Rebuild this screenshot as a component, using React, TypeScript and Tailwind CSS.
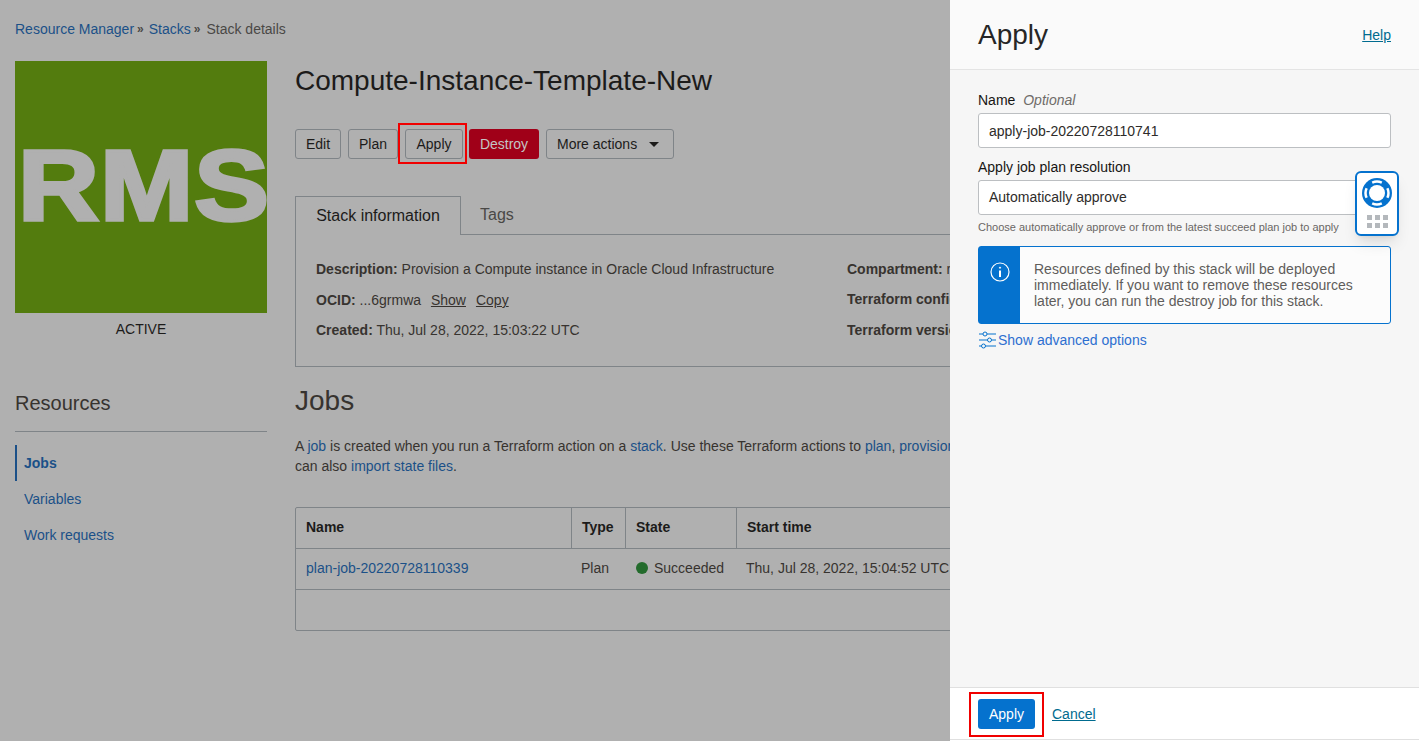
const link = "text-[#1b5088]";

function ActionButton({ label, className = "" }: { label: string; className?: string }) {
  return (
    <button className={`h-[30px] rounded-[3px] border border-[#7f8488] text-sm text-[#1c1b1a] ${className}`}>
      {label}
    </button>
  );
}

function Sidebar() {
  return (
    <aside className="w-[252px] shrink-0">
      <div className="flex h-[252px] items-center justify-end overflow-hidden bg-[#537c0e] pb-[2px]">
        <span className="-mr-[3px] scale-y-[0.9] text-[112px] leading-none font-bold tracking-[1px] text-[#b0b0b0] [-webkit-text-stroke:4px_#b0b0b0]">
          RMS
        </span>
      </div>
      <div className="mt-[8px] text-center text-sm leading-[16px] text-[#1c1b1a]">ACTIVE</div>
      <h2 className="mt-[54px] border-b border-[#7f8488] pb-[16px] text-xl leading-[24px] text-[#37332f]">
        Resources
      </h2>
      <ul className={`mt-[13px] text-sm ${link}`}>
        <li className="flex h-[36px] items-center border-l-2 border-[#1b5088] pl-[7px] font-bold">Jobs</li>
        <li className="flex h-[36px] items-center pl-[9px]">Variables</li>
        <li className="flex h-[36px] items-center pl-[9px]">Work requests</li>
      </ul>
    </aside>
  );
}

function InfoRow({ children, className = "h-[31px]" }: { children: React.ReactNode; className?: string }) {
  return <div className={`leading-[20px] whitespace-nowrap ${className}`}>{children}</div>;
}

function StackInfo() {
  return (
    <>
      <div className="mt-[37px] flex h-[39px]">
        <div className="z-10 flex h-[39px] w-[166px] items-center justify-center rounded-t-[1px] border border-b-0 border-[#7f8488] text-base text-[#1c1b1a]">
          Stack information
        </div>
        <div className="flex flex-1 border-b border-[#7f8488]">
          <span className="ml-[19px] pt-[7px] text-base text-[#4a4846]">Tags</span>
        </div>
      </div>
      <div className="flex h-[132px] border border-t-0 border-[#7f8488] pt-[24px] pl-[20px] text-sm text-[#37332f]">
        <div className="w-[531px]">
          <InfoRow><b>Description:</b> Provision a Compute instance in Oracle Cloud Infrastructure</InfoRow>
          <InfoRow className="h-[30px]">
            <b>OCID:</b> ...6grmwa <span className="ml-[6px] underline">Show</span>
            <span className="ml-[10px] underline">Copy</span>
          </InfoRow>
          <InfoRow><b>Created:</b> Thu, Jul 28, 2022, 15:03:22 UTC</InfoRow>
        </div>
        <div>
          <InfoRow className="h-[30px]"><b>Compartment:</b> root</InfoRow>
          <InfoRow><b>Terraform configuration</b></InfoRow>
          <InfoRow><b>Terraform version</b></InfoRow>
        </div>
      </div>
    </>
  );
}

function JobsTable() {
  const heads = [
    { label: "Name", width: "w-[276px]", pad: "pl-[10px]" },
    { label: "Type", width: "w-[54px]", pad: "pl-[10px]" },
    { label: "State", width: "w-[111px]", pad: "pl-[10px]" },
    { label: "Start time", width: "w-[300px]", pad: "pl-[10px]" },
  ];
  return (
    <div className="mt-[31px] h-[124px] w-[900px] rounded-[2px] border border-[#7f8488] text-sm">
      <div className="flex h-[41px] border-b border-[#7f8488] font-bold text-[#1c1b1a]">
        {heads.map((h, i) => (
          <div
            key={h.label}
            className={`flex items-center pb-[2px] ${h.width} ${h.pad} ${i < 3 ? "border-r border-[#7f8488]" : ""}`}
          >
            {h.label}
          </div>
        ))}
      </div>
      <div className="flex h-[41px] items-center border-b border-[#7f8488] pb-[2px] text-[#37332f]">
        <div className={`w-[276px] pl-[10px] ${link}`}>plan-job-20220728110339</div>
        <div className="w-[54px] pl-[9px]">Plan</div>
        <div className="flex w-[111px] items-center pl-[10px]">
          <span className="mr-[6px] h-[12px] w-[12px] rounded-full bg-[#236b2c]" />
          Succeeded
        </div>
        <div className="pl-[9px] whitespace-nowrap">Thu, Jul 28, 2022, 15:04:52 UTC</div>
      </div>
    </div>
  );
}

function StackPage() {
  return (
    <main className="relative w-[950px] shrink-0 overflow-hidden bg-[#b0b0b0] pt-[21px] pl-[15px]">
      <nav className="flex h-[16px] items-center text-sm whitespace-nowrap text-[#4a4846]">
        <span className={link}>Resource Manager</span>
        <span className="mx-[3px] text-xs font-bold">»</span>
        <span className={`ml-[2px] ${link}`}>Stacks</span>
        <span className="mx-[3px] text-xs font-bold">»</span>
        <span className="ml-[3px]">Stack details</span>
      </nav>
      <div className="mt-[24px] flex gap-[28px]">
        <Sidebar />
        <section className="w-[1100px] shrink-0">
          <h1 className="mt-[3px] text-[28px] leading-[34px] text-[#1c1b1a]">Compute-Instance-Template-New</h1>
          <div className="mt-[31px] flex gap-[7px]">
            <ActionButton label="Edit" className="w-[46px]" />
            <ActionButton label="Plan" className="w-[50px]" />
            <ActionButton label="Apply" className="w-[58px]" />
            <button className="-ml-px h-[30px] w-[70px] rounded-[3px] bg-[#a00018] text-sm text-[#c4c4c4]">Destroy</button>
            <button className="flex h-[30px] w-[128px] items-center rounded-[3px] border border-[#7f8488] pl-[10px] text-sm text-[#1c1b1a]">
              More actions
              <span className="ml-[12px] h-0 w-0 border-x-[5px] border-t-[5px] border-x-transparent border-t-[#1c1b1a]" />
            </button>
          </div>
          <StackInfo />
          <h2 className="mt-[17px] text-[28px] leading-[34px] text-[#37332f]">Jobs</h2>
          <p className="mt-[18px] text-sm leading-[20px] whitespace-nowrap text-[#37332f]">
            A <span className={link}>job</span> is created when you run a Terraform action on a{" "}
            <span className={link}>stack</span>. Use these Terraform actions to <span className={link}>plan</span>,{" "}
            <span className={link}>provision</span>, and destroy resources. You
            <br />
            can also <span className={link}>import state files</span>.
          </p>
          <JobsTable />
        </section>
      </div>
      {/* highlight round the Apply action */}
      <div className="absolute top-[123px] left-[398px] h-[41px] w-[69px] border-2 border-[#f00000]" />
    </main>
  );
}

function SlidersGlyph() {
  return (
    <svg width="20" height="18" viewBox="0 0 20 18" fill="none" stroke="#0572ce" strokeWidth="1" className="shrink-0">
      <path d="M1 3h4M9 3h9M1 9h8.5M13.5 9H18M1 15h2.5M7.5 15H18" />
      <circle cx="7" cy="3" r="2" />
      <circle cx="11.5" cy="9" r="2" />
      <circle cx="5.5" cy="15" r="2" />
    </svg>
  );
}

function LifeRing() {
  return (
    <svg width="30" height="30" viewBox="0 0 30 30">
      <circle cx="15" cy="15" r="15" fill="#0572ce" />
      <circle cx="15" cy="15" r="8" fill="white" />
      <g fill="none" stroke="white" strokeWidth="2.5">
        <path d="M10.2 4.6a11.5 11.5 0 0 1 9.6 0" />
        <path d="M25.4 10.2a11.5 11.5 0 0 1 0 9.6" />
        <path d="M19.8 25.4a11.5 11.5 0 0 1-9.6 0" />
        <path d="M4.6 19.8a11.5 11.5 0 0 1 0-9.6" />
      </g>
    </svg>
  );
}

function ApplyPanel() {
  return (
    <aside className="relative flex w-[469px] shrink-0 flex-col bg-[#f6f6f6]">
      <header className="flex h-[70px] items-start justify-between border-b border-[#e4e4e4] bg-[#fafafa] pt-[18px] pr-[28px] pl-[28px]">
        <h2 className="text-[28px] leading-[34px] text-[#262626]">Apply</h2>
        <a className="mt-[8px] text-sm leading-[18px] text-[#006b8f] underline">Help</a>
      </header>
      <div className="flex-1 px-[28px] pt-[22px]">
        <label className="block text-sm leading-[16px] text-[#161513]">
          Name <i className="ml-[4px] text-[#6f6c69]">Optional</i>
        </label>
        <div className="mt-[5px] flex h-[35px] items-center rounded-[3px] border border-[#bcbfc2] bg-white px-[10px] text-sm text-[#2e2c2a]">
          apply-job-20220728110741
        </div>
        <label className="mt-[11px] block text-sm leading-[16px] text-[#161513]">Apply job plan resolution</label>
        <div className="mt-[5px] flex h-[35px] items-center rounded-[3px] border border-[#bcbfc2] bg-white px-[10px] pb-[2px] text-sm text-[#2e2c2a]">
          Automatically approve
        </div>
        <p className="mt-[5px] text-[11px] leading-[14px] whitespace-nowrap text-[#6a6765]">
          Choose automatically approve or from the latest succeed plan job to apply
        </p>
        <div className="mt-[12px] flex h-[78px] rounded-[3px] border border-[#0572ce] bg-[#fcfcfc]">
          <div className="flex w-[41px] shrink-0 justify-center bg-[#0572ce] pt-[15px]">
            <svg width="20" height="20" viewBox="0 0 20 20" fill="none" stroke="white" strokeWidth="1.2">
              <circle cx="10" cy="10" r="9" />
              <path d="M10 8.5v6.5" strokeWidth="2" />
              <circle cx="10" cy="5.7" r="0.6" fill="white" strokeWidth="1" />
            </svg>
          </div>
          <p className="pt-[14px] pl-[14px] text-sm leading-[16px] whitespace-nowrap text-[#5f5d5b]">
            Resources defined by this stack will be deployed
            <br />
            immediately. If you want to remove these resources
            <br />
            later, you can run the destroy job for this stack.
          </p>
        </div>
        <div className="mt-[6px] flex items-center text-sm text-[#2d6fd0]">
          <SlidersGlyph />
          Show advanced options
        </div>
      </div>
      <footer className="flex h-[53px] items-center gap-[17px] border-y border-[#e0e0e0] bg-white pl-[28px]">
        <button className="h-[30px] w-[57px] rounded-[3px] bg-[#0572ce] text-sm text-white">Apply</button>
        <a className="text-sm text-[#006b8f] underline">Cancel</a>
      </footer>
      <div className="h-px bg-white" />
      {/* highlight round the footer Apply button */}
      <div className="absolute top-[692px] left-[19px] h-[45px] w-[75px] border-2 border-[#f00000]" />
      {/* floating help launcher */}
      <div className="absolute top-[171px] left-[405px] flex h-[65px] w-[44px] flex-col items-center rounded-[6px] border-2 border-[#0572ce] bg-white pt-[5px] shadow-lg">
        <LifeRing />
        <div className="mt-[7px] grid grid-cols-3 gap-x-[3px] gap-y-[3px]">
          {[0, 1, 2, 3, 4, 5].map((n) => (
            <span key={n} className="h-[5px] w-[5px] bg-[#b4b8bc]" />
          ))}
        </div>
      </div>
    </aside>
  );
}

export default function App() {
  return (
    <div className="flex h-[741px] overflow-hidden font-['Liberation_Sans',Arial,sans-serif]">
      <StackPage />
      <ApplyPanel />
    </div>
  );
}
